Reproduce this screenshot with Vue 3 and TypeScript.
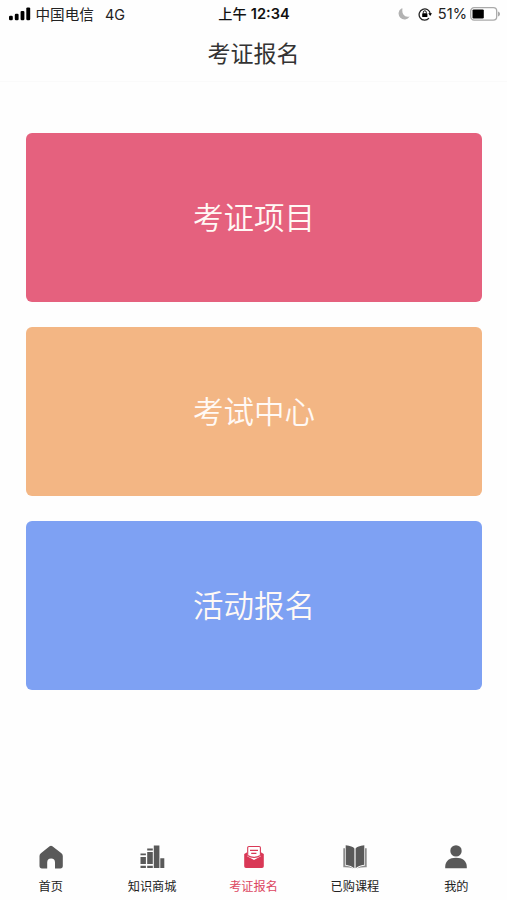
<script setup lang="ts">
interface Entry { label: string; tone: string }
interface Tab { label: string; icon: string }

const entries: Entry[] = [
  { label: '考证项目', tone: 'rose' },
  { label: '考试中心', tone: 'apricot' },
  { label: '活动报名', tone: 'blue' },
]
const tabs: Tab[] = [
  { label: '首页', icon: 'home' },
  { label: '知识商城', icon: 'mall' },
  { label: '考证报名', icon: 'exam' },
  { label: '已购课程', icon: 'course' },
  { label: '我的', icon: 'me' },
]
const active = 'exam'
</script>

<template>
  <div class="page">
    <div class="status">
      <div class="side">
        <svg class="signal" width="22" height="14" viewBox="0 0 22 14">
          <rect x="0" y="8.8" width="3.8" height="4.4" rx="1.2" />
          <rect x="5.8" y="6.7" width="3.8" height="6.5" rx="1.2" />
          <rect x="11.6" y="3.9" width="3.8" height="9.3" rx="1.2" />
          <rect x="17.3" y="0.4" width="3.9" height="12.8" rx="1.2" />
        </svg>
        <span class="carrier">中国电信</span>
        <span class="network">4G</span>
      </div>
      <div class="time"><span class="period">上午</span><span class="clock">12:34</span></div>
      <div class="side right">
        <svg class="moon" width="12" height="12" viewBox="0 0 12 12">
          <path d="M3.4 .4A6 6 0 1 0 11.7 8.6Q7.4 9.6 5.4 6.5 3.7 3.6 4.6.6Z" fill="#b2b2b2" />
        </svg>
        <svg class="lock" width="14" height="14" viewBox="0 0 14 14">
          <path d="M11 11.2A5.6 5.6 0 1 1 12.3 7" fill="none" stroke="#222" stroke-width="1.3" />
          <path d="M10.3 6.2h3.7L12.2 9Z" />
          <rect x="4.2" y="6.3" width="5.2" height="3.8" rx=".6" />
          <path d="M5.3 6.5V5.3a1.5 1.5 0 0 1 3 0v1.2" fill="none" stroke="#111" stroke-width="1" />
        </svg>
        <span class="percent">51%</span>
        <svg class="battery" width="31" height="14" viewBox="0 0 31 14">
          <rect x=".7" y=".7" width="26" height="12.4" rx="3.4" fill="#fff" stroke="#aaa" stroke-width="1.3" />
          <rect x="2.5" y="2.4" width="11.3" height="9" rx="1.2" />
          <path d="M28 4.4c2.7.9 2.7 4.1 0 5Z" fill="#aaa" />
        </svg>
      </div>
    </div>
    <header class="title">考证报名</header>
    <main class="entries">
      <button v-for="entry in entries" :key="entry.label" class="entry" :class="entry.tone">{{ entry.label }}</button>
    </main>
    <nav class="tabs">
      <a v-for="tab in tabs" :key="tab.icon" class="tab" :class="{ active: tab.icon === active }">
        <svg class="icon" width="26" height="26" viewBox="0 0 26 26">
          <g v-if="tab.icon === 'home'">
            <path d="M11.6 2.2Q13 1.1 14.4 2.2L23.4 9.3Q24.8 10.5 24.8 12V21.8Q24.8 24.4 22.3 24.4H17V18.4a3.9 3.9 0 0 0-7.8 0V24.4H4Q1.5 24.4 1.5 21.8V12Q1.5 10.5 2.9 9.3Z" />
          </g>
          <g v-else-if="tab.icon === 'mall'">
            <path d="M1.5 9.4h5.4v1.8H1.5zM1.5 13h5.4v6.9H1.5zM1.5 21.7h5.4v2.3H1.5zM8.2 4.6h5.6v1.8H8.2zM8.2 8h5.6v11.9H8.2zM8.2 21.7h5.6v2.3H8.2zM14.8 1.4h5.6V24h-5.6zM21.3 14.2h4V24h-4z" />
          </g>
          <g v-else-if="tab.icon === 'exam'">
            <path d="M3.2 10.1 6.2 8.2V12.3L13 16 19.8 12.3V8.2L22.8 10.1V22.3Q22.8 24.1 21 24.1H5Q3.2 24.1 3.2 22.3Z" />
            <path d="M6.7 11.5V3.7Q6.7 2.5 7.9 2.5H18.2Q19.4 2.5 19.4 3.7V11.5Q16.6 13.4 13 13.4T6.7 11.5Z" fill="#fff" stroke="currentColor" stroke-width="1.1" />
            <path d="M9 6.3H17M10.2 9.3H15.4" fill="none" stroke="currentColor" stroke-width="1.2" />
          </g>
          <g v-else-if="tab.icon === 'course'">
            <path d="M1.3 4.2H3V21.6Q8 22 11.4 24.4 7 23 1.3 23.2ZM24.7 4.2H23V21.6Q18 22 14.6 24.4 19 23 24.7 23.2Z" fill="#8d8d8d" />
            <path d="M3.7 1.3Q10.6 2.1 12.4 4.4V24.2Q9.4 21.4 3.7 20.7ZM22.3 1.3Q15.4 2.1 13.6 4.4V24.2Q16.6 21.4 22.3 20.7Z" />
          </g>
          <g v-else>
            <circle cx="13" cy="6.9" r="5.7" />
            <path d="M2.2 24.3V22.7C2.2 17 6.5 13.7 13 13.7S23.8 17 23.8 22.7V24.3Z" />
          </g>
        </svg>
        <span class="label">{{ tab.label }}</span>
      </a>
    </nav>
  </div>
</template>

<style>
body { background: #fefefe; }
</style>

<style scoped>
.page {
  display: flex;
  flex-direction: column;
  height: 900px;
  box-sizing: border-box;
  overflow: hidden;
  background: #fefefe;
  font-family: Inter, "Noto Sans CJK SC", sans-serif;
}
.status {
  display: grid;
  grid-template-columns: 1fr auto 1fr;
  align-items: center;
  height: 27px;
  padding: 0 6px 0 9px;
  font-size: 14.6px;
  line-height: 27px;
  color: #222;
  white-space: nowrap;
}
.side { display: flex; align-items: center; }
.right { justify-content: flex-end; }
.carrier { margin-left: 4.5px; padding-top: 2px; line-height: 25px; }
.network { margin-left: 11px; font-size: 14.4px; }
.time { display: flex; gap: 4px; padding-right: 2px; color: #111; font-weight: 600; }
.period { font-size: 14.2px; font-weight: 500; }
.clock { font-size: 14.6px; padding-top: 1px; }
.lock { margin-left: 8px; }
.percent { margin-left: 5.5px; font-size: 14.6px; }
.battery { margin-left: 3px; }
.title {
  height: 55px;
  box-sizing: border-box;
  border-bottom: 1px solid #fafafa;
  padding-top: 1px;
  text-align: center;
  font-size: 23px;
  line-height: 53px;
  color: #333;
}
.entries {
  flex: 1;
  display: flex;
  flex-direction: column;
  gap: 25px;
  padding: 51px 25px 0 26px;
}
.entry {
  height: 169px;
  border: 0;
  border-radius: 6px;
  padding: 0 0 3px;
  font: inherit;
  font-weight: 350;
  font-size: 30.5px;
  color: #fff9f5;
}
.rose { background: #e5617e; }
.apricot { background: #f3b684; }
.blue { background: #7ea1f3; }
.tabs { display: flex; height: 56px; }
.tab {
  flex: 1;
  display: flex;
  flex-direction: column;
  align-items: center;
  color: #222;
}
.icon { fill: #595959; color: #595959; }
.label { margin-top: 8px; font-size: 12.2px; line-height: 18px; }
.active { color: #dc4661; }
.active .icon { fill: #d93856; color: #d93856; }
</style>
